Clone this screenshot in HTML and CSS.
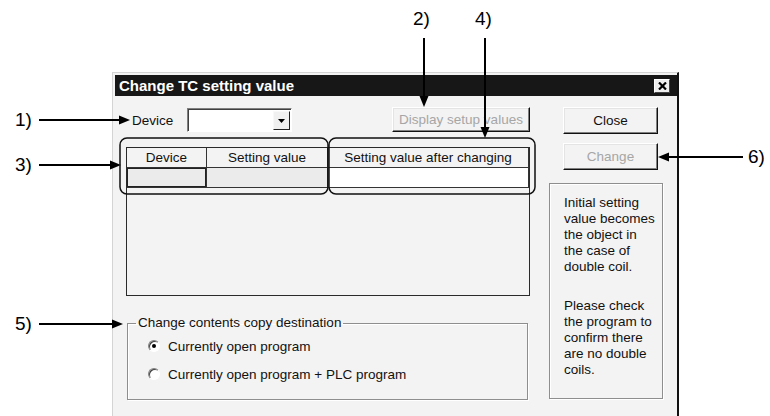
FILE: index.html
```html
<!DOCTYPE html>
<html lang="en">
  <head>
    <meta charset="UTF-8" />
    <meta name="viewport" content="width=device-width, initial-scale=1.0" />
    <title>Change TC setting value</title>
    <link rel="stylesheet" href="styles.css">
  </head>
  <body>
    <div class="dialog">
      <div class="titlebar">
        <span class="title">Change TC setting value</span>
        <span class="title-close">
          <svg width="9" height="8" viewBox="0 0 9 8"><path d="M1 0.5 L8 7.5 M8 0.5 L1 7.5" stroke="#000" stroke-width="2.2" /></svg>
        </span>
      </div>
      <div class="content">
        <div class="main-col">
          <div class="device-row">
            <span class="device-label">Device</span>
            <div class="combo">
              <span class="combo-btn">
                <svg width="7" height="4" viewBox="0 0 7 4"><path d="M0 0 H7 L3.5 4 Z" fill="#000" /></svg>
              </span>
            </div>
            <button class="btn btn-disabled btn-wide">Display setup values</button>
          </div>

          <div class="grid">
            <div class="grid-head">
              <div class="cell">Device</div>
              <div class="cell">Setting value</div>
              <div class="cell">Setting value after changing</div>
            </div>
            <div class="grid-row">
              <div class="cell cell-focus"></div>
              <div class="cell cell-ro"></div>
              <div class="cell cell-edit"></div>
            </div>
          </div>

          <fieldset class="copy-dest">
            <legend>Change contents copy destination</legend>
            <div class="radio"><span class="radio-dot checked"></span>Currently open program</div>
            <div class="radio"><span class="radio-dot"></span>Currently open program + PLC program</div>
          </fieldset>
        </div>

        <div class="side-col">
          <button class="btn">Close</button>
          <button class="btn btn-disabled">Change</button>
          <div class="note">
            <p>Initial setting<br />value becomes<br />the object in<br />the case of<br />double coil.</p>
            <p>Please check<br />the program to<br />confirm there<br />are no double<br />coils.</p>
          </div>
        </div>
      </div>
    </div>

    <!-- callouts drawn over the dialog -->
    <svg class="callouts" width="770" height="416" viewBox="0 0 770 416">
      <g stroke="#000" stroke-width="2">
        <line x1="39" y1="120" x2="121" y2="120" />
        <line x1="39" y1="165" x2="112" y2="165" />
        <line x1="39" y1="324" x2="114" y2="324" />
        <line x1="424" y1="38" x2="424" y2="98" />
        <line x1="485" y1="38" x2="485" y2="129" />
        <line x1="743" y1="157" x2="668" y2="157" />
      </g>
      <g fill="#000">
        <polygon points="130,120 119,115.5 119,124.5" />
        <polygon points="121,165 110,160.5 110,169.5" />
        <polygon points="123,324 112,319.5 112,328.5" />
        <polygon points="424,107 419.5,96 428.5,96" />
        <polygon points="485,138 480.5,127 489.5,127" />
        <polygon points="658,157 669,152.5 669,161.5" />
      </g>
      <g fill="none" stroke="#111" stroke-width="1.5">
        <rect x="120" y="138" width="208" height="56" rx="7" />
        <rect x="329" y="138" width="206" height="56" rx="7" />
      </g>
    </svg>
    <span class="callout-num n1">1)</span>
    <span class="callout-num n2">2)</span>
    <span class="callout-num n3">3)</span>
    <span class="callout-num n4">4)</span>
    <span class="callout-num n5">5)</span>
    <span class="callout-num n6">6)</span>
  </body>
</html>
```

FILE: styles.css
```css
* {
  margin: 0;
  padding: 0;
  box-sizing: border-box;
}
body {
  width: 770px;
  height: 416px;
  overflow: hidden;
  position: relative;
  background: #fff;
  padding: 72px 0 0 112px;
  font-family: "Liberation Sans", Arial, sans-serif;
  font-size: 13.5px;
  color: #111;
}

.dialog {
  width: 567px;
  height: 360px;
  background: #f3f3f3;
  border-left: 1px solid #d4d4d4;
  border-top: 1px solid #d4d4d4;
  border-right: 2px solid #111;
  padding: 2px 0 0 2px;
}
.titlebar {
  height: 21px;
  background: #171717;
  color: #fff;
  display: flex;
  align-items: center;
  justify-content: space-between;
  padding: 0 7px 0 4px;
}
.title {
  font-weight: bold;
  font-size: 15px;
}
.title-close {
  width: 16px;
  height: 14px;
  background: #efefef;
  border: 1px solid;
  border-color: #fff #444 #444 #fff;
  display: flex;
  align-items: center;
  justify-content: center;
}

.content {
  display: flex;
  padding: 11px 0 0 11px;
}
.main-col {
  width: 404px;
  padding-top: 1px;
}
.device-row {
  display: flex;
  align-items: center;
  height: 24px;
}
.device-label {
  margin-left: 6px;
  width: 55px;
}
.combo {
  width: 105px;
  height: 24px;
  display: flex;
  background: #fff;
  border: 1px solid;
  border-color: #808080 #fff #fff #808080;
  box-shadow: inset 1px 1px 0 #404040;
  padding: 2px 1px 1px 2px;
}
.combo-btn {
  margin-left: auto;
  width: 17px;
  height: 100%;
  background: #f0f0f0;
  border: 1px solid;
  border-color: #f8f8f8 #222 #222 #f8f8f8;
  display: flex;
  align-items: center;
  justify-content: center;
}

.btn {
  font: inherit;
  color: #111;
  background: #f3f3f3;
  border: 1px solid;
  border-color: #fff #111 #111 #fff;
  box-shadow: inset -1px -1px 0 #808080, inset 1px 1px 0 #e4e4e4;
}
.btn-disabled {
  color: #a6a6a6;
}
.btn-wide {
  margin-left: auto;
  width: 138px;
  height: 25px;
  margin-top: -1px;
}

.grid {
  margin-top: 15px;
  height: 149px;
  border: 1px solid #2a2a2a;
  background: #f3f3f3;
}
.grid-head,
.grid-row {
  display: grid;
  grid-template-columns: 80px 121px 1fr;
}
.cell {
  height: 20px;
  border-right: 1px solid #333;
  border-bottom: 1px solid #333;
  text-align: center;
  line-height: 19px;
}
.cell-focus {
  background: #ebebeb;
  box-shadow: inset 0 0 0 1px #222;
}
.cell-ro {
  background: #ebebeb;
}
.cell-edit {
  background: #fff;
}

.copy-dest {
  margin: 19px 0 0 1px;
  width: 401px;
  height: 85px;
  border: 1px solid #8e8e8e;
  box-shadow: inset 1px 1px 0 #fff, 1px 1px 0 #fff;
  padding: 1px 0 0 20px;
}
.copy-dest legend {
  margin-left: -12px;
  padding: 0 2px;
  line-height: 16px;
}
.radio {
  display: flex;
  align-items: center;
  height: 28px;
}
.radio-dot {
  position: relative;
  width: 12px;
  height: 12px;
  margin-right: 8px;
  border-radius: 50%;
  background: #fff;
  border: 1px solid;
  border-color: #808080 #fff #fff #808080;
  box-shadow: inset 1px 1px 0 #404040;
}
.radio-dot.checked::after {
  content: "";
  position: absolute;
  left: 3px;
  top: 3px;
  width: 4px;
  height: 4px;
  border-radius: 50%;
  background: #000;
}

.side-col {
  margin-left: 19px;
  width: 114px;
}
.side-col .btn {
  display: block;
  margin-left: 14px;
  width: 95px;
  height: 27px;
}
.side-col .btn + .btn {
  margin-top: 9px;
}
.note {
  margin-top: 13px;
  height: 216px;
  border: 1px solid #8e8e8e;
  box-shadow: inset 1px 1px 0 #fff, 1px 1px 0 #fff;
  padding: 11px 0 0 14px;
  line-height: 16px;
}
.note p + p {
  margin-top: 23px;
}

.callouts {
  position: absolute;
  left: 0;
  top: 0;
  pointer-events: none;
}
.callout-num {
  position: absolute;
  font-size: 19px;
  line-height: 20px;
  color: #000;
}
.n1 { left: 15px; top: 110px; }
.n2 { left: 413px; top: 9px; }
.n3 { left: 15px; top: 155px; }
.n4 { left: 475px; top: 9px; }
.n5 { left: 15px; top: 314px; }
.n6 { left: 748px; top: 147px; }
```
